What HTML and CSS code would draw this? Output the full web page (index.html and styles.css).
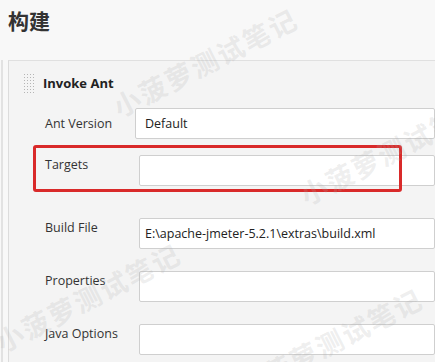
FILE: index.html
```html
<!DOCTYPE html>
<html lang="zh-CN">
<head>
    <meta charset="UTF-8">
    <meta name="viewport" content="width=device-width, initial-scale=1.0">
    <title>构建 - Invoke Ant</title>
    <link rel="stylesheet" href="styles.css">
</head>
<body>
    <h1 class="title">构建</h1>

    <div class="outer">
        <div class="panel">
            <div class="step-head">
                <span class="handle"></span>
                <span class="step-name">Invoke Ant</span>
            </div>

            <div class="fields">
                <div class="row row-select">
                    <label for="antVersion">Ant Version</label>
                    <select id="antVersion" class="select">
                        <option>Default</option>
                    </select>
                </div>

                <div class="row row-targets">
                    <label for="targets">Targets</label>
                    <input type="text" id="targets" class="input">
                </div>

                <div class="row">
                    <label for="buildFile">Build File</label>
                    <input type="text" id="buildFile" class="input" value="E:\apache-jmeter-5.2.1\extras\build.xml">
                </div>

                <div class="row">
                    <label for="props">Properties</label>
                    <input type="text" id="props" class="input">
                </div>

                <div class="row">
                    <label for="javaOpts">Java Options</label>
                    <input type="text" id="javaOpts" class="input">
                </div>
            </div>
        </div>
    </div>

    <!-- watermark over the screenshot -->
    <div class="watermarks">
        <span class="wm wm-1">小菠萝测试笔记</span>
        <span class="wm wm-2">小菠萝测试笔记</span>
        <span class="wm wm-3">小菠萝测试笔记</span>
        <span class="wm wm-4">小菠萝测试笔记</span>
    </div>
</body>
</html>
```

FILE: styles.css
```css
body {
    margin: 0;
    background-color: #f8f8f8;
    font-family: "Open Sans", "Noto Sans", "Noto Sans CJK SC", sans-serif;
    font-size: 12.5px;
    color: #333;
    overflow: hidden;
    height: 362px;
    position: relative;
}

.title {
    margin: 0;
    height: 60px;
    line-height: 40px;
    padding-left: 8px;
    font-family: "Noto Sans CJK SC", sans-serif;
    font-size: 21px;
    font-weight: 700;
    color: #333;
}

.outer {
    margin-left: 1px;
    border-left: 2px solid #e2e2e2;
    padding-left: 5px;
}

.panel {
    border-left: 1px solid #dcdcdc;
    border-top: 1px solid #e0e0e0;
    background-color: #f4f4f4;
    height: 320px;
}

.step-head {
    display: flex;
    align-items: center;
    padding: 12px 0 0 14px;
    height: 20px;
}

.handle {
    width: 12px;
    height: 20px;
    background-image: radial-gradient(circle, #b5b5b5 0.8px, transparent 1px);
    background-size: 3px 3px;
}

.step-name {
    margin-left: 8px;
    font-weight: 700;
    font-size: 13px;
    color: #222;
}

.fields {
    padding: 15px 0 0 36px;
}

.row {
    display: flex;
    align-items: flex-start;
    margin-bottom: 22px;
}

.row label {
    width: 94px;
    flex-shrink: 0;
    line-height: 18px;
    padding-top: 1px;
}

.row-select {
    margin-bottom: 16px;
}

.row-select label {
    width: 90px;
    padding-top: 7px;
}

.row-targets {
    margin-bottom: 32px;
    position: relative;
}

/* red annotation box */
.row-targets::after {
    content: "";
    position: absolute;
    left: -12px;
    top: -10px;
    width: 363px;
    height: 41px;
    border: 3px solid #d92a2a;
    border-radius: 3px;
}

.input, .select {
    box-sizing: border-box;
    height: 31px;
    width: 320px;
    border: 1px solid #cfcfcf;
    border-radius: 2px;
    background-color: #fff;
    font-family: "Open Sans", "Noto Sans", sans-serif;
    font-size: 12.5px;
    color: #222;
    padding: 0 5px;
}

.select {
    width: 330px;
    padding-left: 9px;
    appearance: none;
}

.watermarks {
    position: absolute;
    inset: 0;
    pointer-events: none;
}

.wm {
    position: absolute;
    transform: translate(-50%, -50%) rotate(-27deg);
    font-family: "Noto Sans CJK SC", sans-serif;
    font-size: 27px;
    font-weight: 700;
    letter-spacing: 2px;
    white-space: nowrap;
    color: rgba(170, 170, 170, 0.2);
}

.wm-1 { left: 205px; top: 62px; }
.wm-2 { left: 392px; top: 150px; }
.wm-3 { left: 88px; top: 297px; }
.wm-4 { left: 330px; top: 342px; }
```
